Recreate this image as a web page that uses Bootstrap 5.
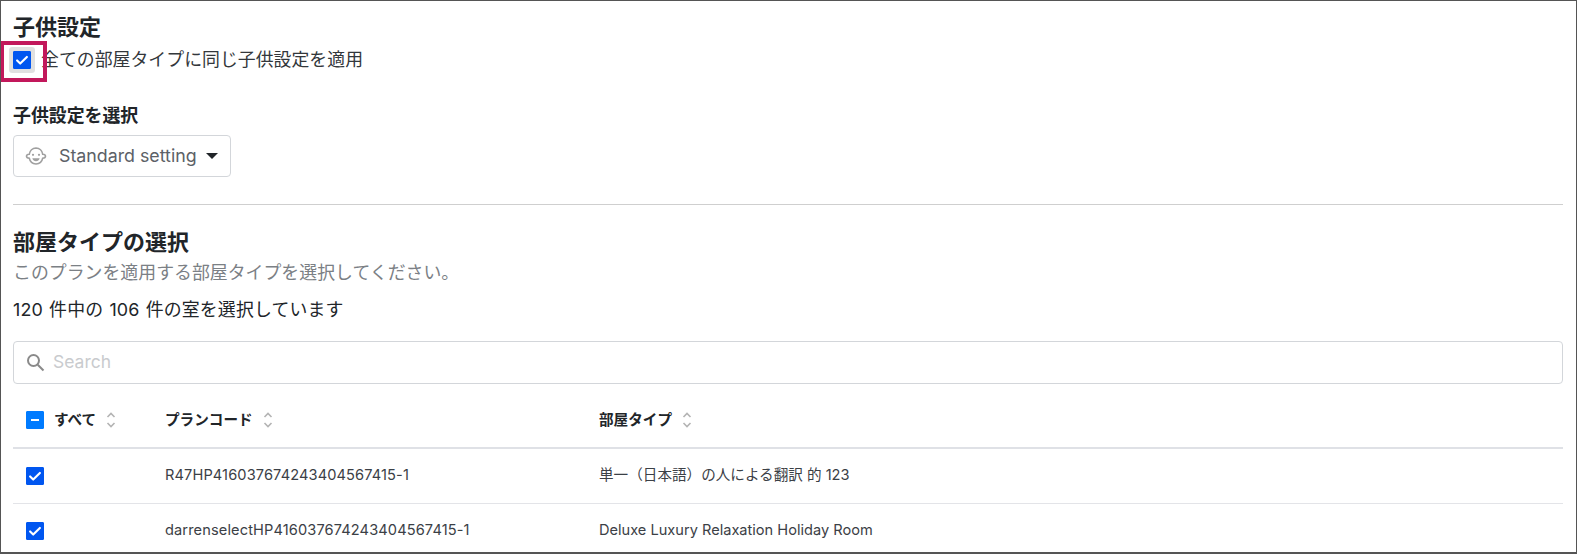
<!DOCTYPE html>
<html lang="ja">
<head>
  <meta charset="UTF-8" />
  <title>子供設定</title>
  <link href="https://cdn.jsdelivr.net/npm/bootstrap@5.3.3/dist/css/bootstrap.min.css" rel="stylesheet">
  <style>
    html, body { height: 555px; overflow: hidden; background: #fff; }
    body { font-family: "Inter", "Noto Sans CJK JP", sans-serif; color: #212529; padding-right: 3px; padding-bottom: 1px; }
    .page-frame { position: relative; height: 554px; overflow: hidden; border: 1px solid #555; border-bottom-width: 2px; padding: 12px 13px 0 12px; }
    .sec-title { font-size: 22px; line-height: 28px; font-weight: 700; margin: 0; }
    .same-row { height: 34px; margin-top: 2px; gap: 10px; font-size: 17.9px; color: #33373b; }
    .same-row .form-check-input { box-shadow: 0 0 0 4px #e0e0e0; }
    .mark-box { position: absolute; left: -1px; top: 40px; width: 47px; height: 41px; border: 4px solid #c2185b; pointer-events: none; }
    .pick-label { font-size: 17.9px; font-weight: 700; line-height: 24px; margin-top: 27px; }
    .child-btn { width: 218px; height: 42px; margin-top: 7px; gap: 12px; padding: 0 12px 0 11px; background: #fff; border: 1px solid #d3d6da; border-radius: 4px; color: #5c6167; font-size: 17.8px; white-space: nowrap; }
    .drop-tri { width: 0; height: 0; border-left: 6px solid transparent; border-right: 6px solid transparent; border-top: 6px solid #212529; margin-left: -3px; }
    .sep { margin: 27px 0 0; border-top: 1px solid #cfcfcf; opacity: 1; }
    .sec-title.second { margin-top: 23px; }
    .sub-note { font-size: 17.9px; line-height: 24px; color: #7b8085; margin-top: 5px; }
    .count-note { font-size: 17.9px; line-height: 24px; margin-top: 13px; color: #212529; word-spacing: 1px; letter-spacing: .15px; }
    .search-box { height: 43px; margin-top: 19px; border: 1px solid #d3d6da; border-radius: 4px; gap: 8px; padding-left: 12px; }
    .search-box input { border: 0; outline: 0; padding: 0; flex: 1; font-size: 17.5px; }
    .search-box input::placeholder { color: #c9cbce; }
    .room-table { margin: 10px 0 0; table-layout: fixed; width: 100%; }
    .room-table th, .room-table td { padding: 0 0 0 13px; border-bottom: 1px solid #e3e4e8; vertical-align: middle; color: #3b4046; font-size: 14.6px; font-weight: 400; }
    .room-table thead th { height: 54px; border-bottom: 2px solid #dfe1e6; font-weight: 700; font-size: 14.6px; color: #212529; }
    .room-table tbody td { height: 55px; }
    .col-check { width: 139px; }
    .col-code { width: 434px; }
    .plan-code { letter-spacing: .12px; }
    input.form-check-input.tick { width: 18px; height: 18px; margin: 0; flex-shrink: 0; border-radius: 1px; }
    input.form-check-input.tick:checked { background-color: #0056f0; border-color: #0056f0; background-image: url("data:image/svg+xml,%3csvg xmlns='http://www.w3.org/2000/svg' viewBox='0 0 18 18'%3e%3cpath fill='none' stroke='%23fff' stroke-width='2.400' stroke-linecap='round' stroke-linejoin='round' d='M3.500 9.500l3.500 3.500 7.500-7.500'/%3e%3c/svg%3e"); background-size: 100%; }
    input.form-check-input.tick:indeterminate { background-color: #007bff; border-color: #007bff; background-image: url("data:image/svg+xml,%3csvg xmlns='http://www.w3.org/2000/svg' viewBox='0 0 18 18'%3e%3cpath fill='none' stroke='%23fff' stroke-width='2.400' d='M4.500 9h9'/%3e%3c/svg%3e"); background-size: 100%; }
    .head-cell { gap: 10px; }
  </style>
</head>
<body>
  <div class="page-frame">
    <h2 class="sec-title">子供設定</h2>
    <div class="d-flex align-items-center same-row">
      <input class="form-check-input tick" type="checkbox" checked>
      <span>全ての部屋タイプに同じ子供設定を適用</span>
    </div>
    <div class="mark-box"></div>

    <div class="pick-label">子供設定を選択</div>
    <button class="d-flex align-items-center child-btn" type="button">
      <svg width="22" height="20" viewBox="0 0 22 20" fill="none" stroke="#a0a0a0" stroke-width="1.600">
        <path d="M4.300 8.200A7.200 7.200 0 0 1 11 2a7.200 7.200 0 0 1 6.700 6.200c1.700.1 2.800 1 2.800 2s-1.100 1.800-2.800 2A7.200 7.200 0 0 1 11 18a7.200 7.200 0 0 1-6.700-5.800c-1.700-.2-2.800-1-2.800-2s1.100-1.900 2.800-2z"/>
        <path d="M7.300 12.200h7.400c-.5 2-2 3-3.700 3s-3.200-1-3.700-3z" fill="#a0a0a0" stroke="none"/>
        <circle cx="8" cy="8.800" r="1.100" fill="#a0a0a0" stroke="none"/><circle cx="14" cy="8.800" r="1.100" fill="#a0a0a0" stroke="none"/>
      </svg>
      <span>Standard setting</span>
      <span class="drop-tri"></span>
    </button>

    <hr class="sep">

    <h2 class="sec-title second">部屋タイプの選択</h2>
    <div class="sub-note">このプランを適用する部屋タイプを選択してください。</div>
    <div class="count-note">120 件中の 106 件の室を選択しています</div>

    <div class="d-flex align-items-center search-box">
      <svg width="19" height="19" viewBox="0 0 19 19" fill="none" stroke="#8a8a8a" stroke-width="2">
        <circle cx="7.500" cy="7.500" r="5.500"/><path d="M11.700 11.700l5.800 5.800"/>
      </svg>
      <input type="text" placeholder="Search">
    </div>

    <table class="room-table">
      <thead>
        <tr>
          <th class="col-check">
            <div class="d-flex align-items-center head-cell">
              <input class="form-check-input tick" type="checkbox" id="allRooms">
              <span>すべて</span>
              <svg width="10" height="18" viewBox="0 0 10 18" fill="none" stroke="#b4b4b4" stroke-width="1.600"><path d="M1.500 6L5 2.500 8.500 6M1.500 12L5 15.500 8.500 12"/></svg>
            </div>
          </th>
          <th class="col-code">
            <div class="d-flex align-items-center head-cell">
              <span>プランコード</span>
              <svg width="10" height="18" viewBox="0 0 10 18" fill="none" stroke="#b4b4b4" stroke-width="1.600"><path d="M1.500 6L5 2.500 8.500 6M1.500 12L5 15.500 8.500 12"/></svg>
            </div>
          </th>
          <th>
            <div class="d-flex align-items-center head-cell">
              <span>部屋タイプ</span>
              <svg width="10" height="18" viewBox="0 0 10 18" fill="none" stroke="#b4b4b4" stroke-width="1.600"><path d="M1.500 6L5 2.500 8.500 6M1.500 12L5 15.500 8.500 12"/></svg>
            </div>
          </th>
        </tr>
      </thead>
      <tbody>
        <tr>
          <td><input class="form-check-input tick d-block" type="checkbox" checked></td>
          <td class="plan-code">R47HP416037674243404567415-1</td>
          <td>単一（日本語）の人による翻訳 的 123</td>
        </tr>
        <tr>
          <td><input class="form-check-input tick d-block" type="checkbox" checked></td>
          <td class="plan-code">darrenselectHP416037674243404567415-1</td>
          <td>Deluxe Luxury Relaxation Holiday Room</td>
        </tr>
      </tbody>
    </table>
  </div>
  <script src="https://cdn.jsdelivr.net/npm/bootstrap@5.3.3/dist/js/bootstrap.bundle.min.js"></script>
  <script>
    document.getElementById("allRooms").indeterminate = true;
  </script>
</body>
</html>
